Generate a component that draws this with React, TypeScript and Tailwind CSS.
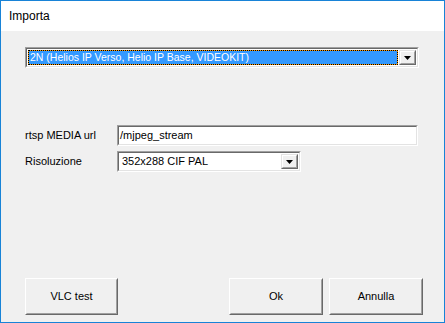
import React from "react";

const sunken = "border border-t-[#a0a0a0] border-l-[#a0a0a0] border-b-white border-r-white";
const sunkenInner = "border border-t-[#696969] border-l-[#696969] border-b-[#e3e3e3] border-r-[#e3e3e3]";
const raised = "border border-t-[#e3e3e3] border-l-[#e3e3e3] border-b-[#696969] border-r-[#696969]";
const raisedInner = "border border-t-white border-l-white border-b-[#a0a0a0] border-r-[#a0a0a0]";

function Arrow() {
  return (
    <svg width="7" height="4" viewBox="0 0 7 4">
      <path d="M0 0H7L3.5 4Z" fill="#000" />
    </svg>
  );
}

function DropBtn() {
  return (
    <div className={`${raised} w-[17px] h-full shrink-0`}>
      <div className={`${raisedInner} w-full h-full bg-[#f0f0f0] flex items-center justify-center`}>
        <Arrow />
      </div>
    </div>
  );
}

function Button({ label, className }: { label: string; className: string }) {
  return (
    <div className={`border border-t-white border-l-white border-b-[#696969] border-r-[#696969] ${className} h-[37px]`}>
      <div className="border border-t-[#f0f0f0] border-l-[#f0f0f0] border-b-[#a0a0a0] border-r-[#a0a0a0] w-full h-full bg-[#f0f0f0] flex items-center justify-center text-[11px] text-black">
        {label}
      </div>
    </div>
  );
}

export default function App() {
  return (
    <div
      className="w-[445px] h-[323px] border border-[#1883d7] flex flex-col bg-[#f0f0f0]"
      style={{ fontFamily: '"Liberation Sans", Arial, sans-serif' }}
    >
      <div className="h-[30px] bg-white flex items-center pl-[8px] text-[12px] text-black shrink-0">
        Importa
      </div>
      <div className="flex-1 flex flex-col pl-[24px]">
        {/* combo 1 */}
        <div className={`${sunken} mt-[16px] w-[394px] h-[21px]`}>
          <div className={`${sunkenInner} w-full h-full bg-white flex p-[1px] gap-[1px]`}>
            <div className="flex-1 bg-[#ff9900]">
              <div className="w-full h-full border border-dotted border-black bg-clip-padding bg-[#3399ff] text-white text-[10.5px] leading-[13px] pl-px flex items-center">
                2N (Helios IP Verso, Helio IP Base, VIDEOKIT)
              </div>
            </div>
            <DropBtn />
          </div>
        </div>

        {/* fields */}
        <div className="mt-[57px] flex flex-col gap-[5px]">
          <div className="flex items-center">
            <div className="w-[92px] text-[11px] text-black">rtsp MEDIA url</div>
            <div className={`${sunken} w-[301px] h-[21px]`}>
              <div className={`${sunkenInner} w-full h-full bg-white flex items-center pl-[1px] text-[11px] text-black`}>
                /mjpeg_stream
              </div>
            </div>
          </div>
          <div className="flex items-center">
            <div className="w-[92px] text-[11px] text-black">Risoluzione</div>
            <div className={`${sunken} w-[184px] h-[21px]`}>
              <div className={`${sunkenInner} w-full h-full bg-white flex p-[1px]`}>
                <div className="flex-1 flex items-center pl-[2px] text-[11px] text-black">352x288 CIF PAL</div>
                <DropBtn />
              </div>
            </div>
          </div>
        </div>

        <div className="flex-1" />

        {/* buttons */}
        <div className="flex mb-[7px]">
          <Button label="VLC test" className="w-[93px]" />
          <Button label="Ok" className="w-[94px] ml-[111px]" />
          <Button label="Annulla" className="w-[94px] ml-[6px]" />
        </div>
      </div>
    </div>
  );
}
